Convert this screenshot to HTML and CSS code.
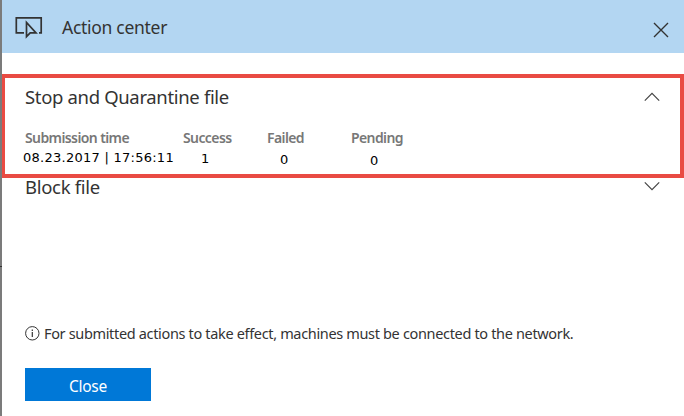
FILE: index.html
```html
<!DOCTYPE html>
<html lang="en">
<head>
<meta charset="utf-8">
<title>Action center</title>
<link rel="stylesheet" href="styles.css">
</head>
<body>
<main class="panel">
  <header class="header">
    <svg class="header-icon" width="28" height="24" viewBox="0 0 28 24" fill="none" stroke="#333" stroke-width="1.7"><path d="M9 16.8H1.3V1.8H26.2V16.8H24"/><path d="M11.5 6.5V20.6L15.2 16.8H21Z"/></svg>
    <h1 class="title"><span>Action center</span></h1>
    <svg class="close-icon" width="16" height="16" viewBox="0 0 16 16" fill="none" stroke="#333" stroke-width="1.4"><path d="M1 1L15 15M15 1L1 15"/></svg>
  </header>
  <section class="section highlighted">
    <div class="section-head">
      <h2 class="section-title"><span class="t-stop">Stop and Quarantine file</span></h2>
      <svg class="chevron" width="16" height="10" viewBox="0 0 16 10" fill="none" stroke="#444" stroke-width="1.2"><path d="M.8 8.6L8 1.4L15.2 8.6"/></svg>
    </div>
    <div class="stats">
      <div class="stat"><span class="label">Submission time</span><span class="value v-time">08.23.2017 | 17:56:11</span></div>
      <div class="stat"><span class="label">Success</span><span class="value v-success">1</span></div>
      <div class="stat"><span class="label">Failed</span><span class="value v-failed">0</span></div>
      <div class="stat"><span class="label">Pending</span><span class="value v-pending">0</span></div>
    </div>
  </section>
  <section class="section block-file">
    <div class="section-head">
      <h2 class="section-title"><span class="t-block">Block file</span></h2>
      <svg class="chevron" width="16" height="10" viewBox="0 0 16 10" fill="none" stroke="#444" stroke-width="1.2"><path d="M.8 1.4L8 8.6L15.2 1.4"/></svg>
    </div>
  </section>
  <footer class="footer">
    <p class="note">
      <svg width="15" height="15" viewBox="0 0 15 15" fill="none" stroke="#333"><circle cx="7.3" cy="7.3" r="6.7"/><path d="M7.3 6V11M7.3 3.5V4.9" stroke-width="1.2"/></svg>
      <span class="note-text">For submitted actions to take effect, machines must be connected to the network.</span>
    </p>
    <button class="button" type="button"><span>Close</span></button>
  </footer>
</main>
</body>
</html>
```
FILE: styles.css
```css
* { box-sizing: border-box; }
body { margin: 0; background: #fff; color: #333; font-family: "Noto Sans", "Open Sans", sans-serif; }
h1, h2, p { margin: 0; font-weight: 400; }
svg { display: block; flex: none; }
.panel { width: 684px; height: 416px; padding-left: 2px; background: linear-gradient(#333, #333) 0 266px / 2px 1px no-repeat, linear-gradient(#7b7b7b, #7b7b7b) 0 0 / 2px 100% no-repeat; overflow: hidden; display: flex; flex-direction: column; }
.header { height: 53px; flex: none; background: #b3d6f2; display: flex; padding: 0 15.5px 0 13px; }
.header-icon { margin-top: 16px; }
.title { margin-left: 19px; font-size: 17.5px; line-height: 54px; letter-spacing: -0.29px; flex: 1; }
.close-icon { margin-top: 21.5px; }
.section { padding-right: 24px; padding-left: 23px; }
.section-head { display: flex; justify-content: space-between; }
.section-title { font-size: 18.5px; line-height: 26px; white-space: nowrap; }
.highlighted { flex: none; margin-top: 21px; height: 104px; border: 4px solid #e94b43; border-left-width: 3px; padding: 6px 20px 0; }
.highlighted .chevron { margin-top: 8px; }
.t-stop { letter-spacing: -0.34px; }
.t-block { letter-spacing: -0.3px; }
.stats { display: grid; grid-template-columns: 158px 84px 84px 90px; margin-top: 18px; }
.stat { display: flex; flex-direction: column; align-items: flex-start; white-space: nowrap; }
.label { font-size: 14px; line-height: 20px; font-weight: 600; color: #777; letter-spacing: -0.6px; }
.value { font-family: "DejaVu Sans", sans-serif; font-size: 13px; line-height: 18px; color: #000; margin-top: 1px; }
.v-time { margin-left: -2px; letter-spacing: 0.26px; }
.v-success { margin: 2px 0 0 18px; }
.v-failed { margin: 3px 0 0 13px; }
.v-pending { margin: 4px 0 0 19px; }
.block-file { height: 142px; flex: none; }
.block-file .section-title { margin-top: -4px; }
.block-file .chevron { margin-top: 3px; }
.footer { padding-left: 23px; }
.note { display: flex; height: 26px; align-items: center; }
.note-text { margin: -1px 0 0 4px; font-size: 14.5px; letter-spacing: -0.34px; white-space: nowrap; }
.button { display: block; width: 126px; height: 33px; margin-top: 22px; padding: 3px 0 0; border: 0; background: #0078d7; color: #fff; font: 15.5px "Noto Sans", "Open Sans", sans-serif; letter-spacing: -0.3px; }
```
